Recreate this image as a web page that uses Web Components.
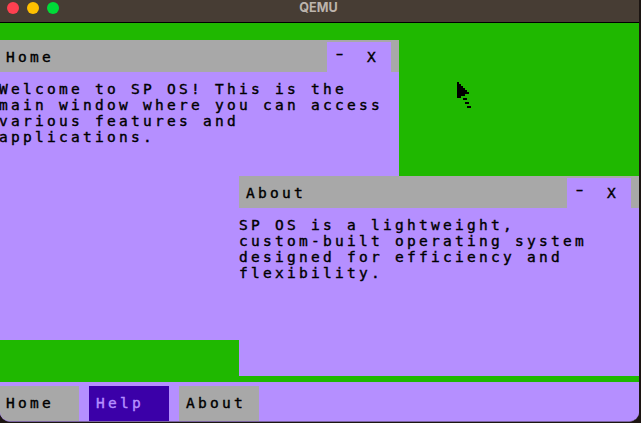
<!DOCTYPE html>
<html lang="en"><head><meta charset="utf-8"><title>QEMU</title>
<style>html,body{margin:0;width:641px;height:423px;overflow:hidden;background:#1c1512}</style></head>
<body>
<qemu-frame>
  <os-window style="left:-1px;top:17px" heading="Home"><span>Welcome to SP OS! This is the</span><span>main window where you can access</span><span>various features and</span><span>applications.</span></os-window>
  <os-window style="left:239px;top:153px;--h:200px" heading="About"><span>SP OS is a lightweight,</span><span>custom-built operating system</span><span>designed for efficiency and</span><span>flexibility.</span></os-window>
  <os-cursor></os-cursor>
  <os-taskbar slot="bar"><task-button>Home</task-button><task-button active>Help</task-button><task-button>About</task-button></os-taskbar>
</qemu-frame>
<script>
const make=(name,html)=>customElements.define(name,class extends HTMLElement{
  constructor(){super();this.attachShadow({mode:'open'}).innerHTML=html;}
  connectedCallback(){const t=this.shadowRoot.querySelector('.heading');if(t)t.textContent=this.getAttribute('heading');}
});
make('qemu-frame',`<style>
:host{display:flex;flex-direction:column;box-sizing:border-box;width:639px;height:422px;border-radius:0 0 10px 10px;border-bottom:1px solid #79639e;overflow:hidden;font:14.5px/16px "DejaVu Sans Mono",monospace;-webkit-text-stroke:.4px currentColor;letter-spacing:3.27px;color:#000;background:#b58fff}
header{display:grid;grid-template-columns:1fr auto 1fr;height:22px;border-bottom:1px solid #000;background:#473d34;align-items:start}
.lights{display:flex;gap:8px;padding:2px 0 0 7px}
.lights b{width:12px;height:12px;border-radius:50%}
h1{margin:0 2px 0 0;font:bold 12.6px/15px Inter,sans-serif;letter-spacing:0;-webkit-text-stroke:0;color:#bcb4ac}
main{position:relative;flex:1;background:#1fb800;overflow:hidden}
</style><header><div class="lights"><b style="background:#ff4050"></b><b style="background:#ffc000"></b><b style="background:#00dc38"></b></div><h1>QEMU</h1></header><main><slot></slot></main><slot name="bar"></slot>`);
make('os-window',`<style>
:host{position:absolute;display:flex;flex-direction:column;width:400px;height:var(--h,300px);background:#b58fff}
header{display:flex;height:32px;background:#a8a8a8;box-sizing:border-box;padding:2px 8px 0 7px}
.heading{flex:1;padding-top:7px}
nav{display:flex;width:64px;background:#b58fff}
nav span{width:32px;box-sizing:border-box;padding:7px 0 0 8px}
nav span:first-child{padding-top:4px;transform:scaleX(1.5);transform-origin:12px 50%}
section{display:flex;flex-direction:column;padding-top:9px;white-space:pre}
::slotted(span){display:block;height:16px}
</style><header><div class="heading"></div><nav><span>-</span><span>X</span></nav></header><section><slot></slot></section>`);
make('os-taskbar',`<style>:host{display:flex;gap:10px;height:35px;padding-top:4px;margin-left:-1px;background:#b58fff}</style><slot></slot>`);
make('task-button',`<style>:host{display:block;box-sizing:border-box;width:80px;padding:9px 0 0 7px;background:#a8a8a8}
:host([active]){background:#3b00a8;color:#b58fff}</style><slot></slot>`);
make('os-cursor',`<style>:host{position:absolute;left:457px;top:59px;width:16px;height:28px}svg{display:block}</style>
<svg width="16" height="28" shape-rendering="crispEdges"><path d="M0 0h2v2h2v2h2v2h2v2h2v2h2v2h-4v2h-4v2H0zM6 16h4v2H6zM8 20h4v2H8zM10 24h4v2h-4z"/></svg>`);
</script>
</body></html>
